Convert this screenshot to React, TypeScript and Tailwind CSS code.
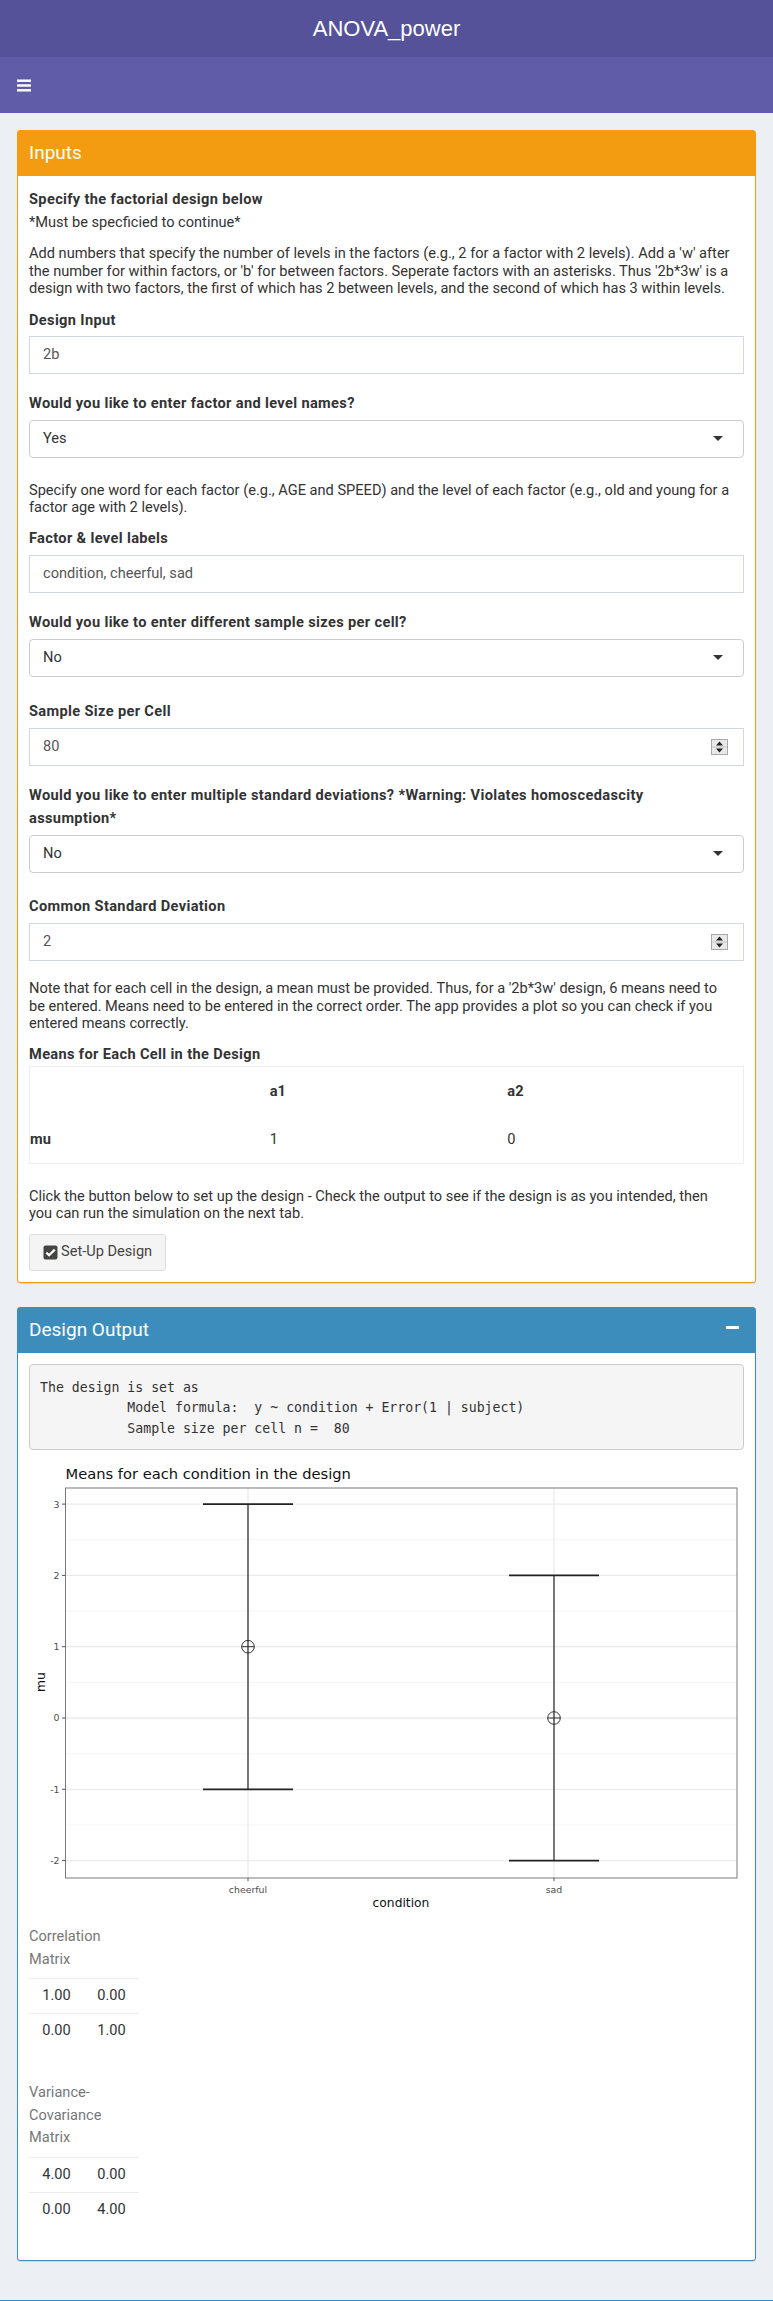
import React from "react";

const body = "font-['Roboto',sans-serif] text-[14.6px]";

function Label({ children, className = "" }: { children: React.ReactNode; className?: string }) {
  return <div className={`font-bold leading-[23px] tracking-[0.35px] ${className}`}>{children}</div>;
}

function Para({ lines, className = "" }: { lines: string[]; className?: string }) {
  return (
    <div className={`leading-[17.6px] ${className}`}>
      {lines.map((l, i) => (
        <div key={i} className="whitespace-nowrap">
          {l}
        </div>
      ))}
    </div>
  );
}

function TextInput({ value, className = "" }: { value: string; className?: string }) {
  return (
    <div className={`h-[38px] border border-[#d2d6de] bg-white flex items-center pl-[13px] text-[#555] ${className}`}>
      {value}
    </div>
  );
}

function NumberInput({ value, className = "" }: { value: string; className?: string }) {
  return (
    <div className={`h-[38px] border border-[#d2d6de] bg-white flex items-center justify-between pl-[13px] pr-[15px] text-[#555] ${className}`}>
      <span>{value}</span>
      <svg width="17" height="16" viewBox="0 0 17 16">
        <rect x="0.5" y="0.5" width="16" height="15" fill="#e9e9e9" stroke="#a9a9a9" />
        <line x1="1" y1="8" x2="16" y2="8" stroke="#c4c4c4" />
        <path d="M5 6.5 L8.5 2.5 L12 6.5 Z" fill="#222" />
        <path d="M5 9.5 L8.5 13.5 L12 9.5 Z" fill="#222" />
      </svg>
    </div>
  );
}

function Select({ value, className = "" }: { value: string; className?: string }) {
  return (
    <div className={`h-[38px] border border-[#cccccc] rounded-[4px] bg-white flex items-center justify-between pl-[13px] pr-[20px] text-[#333] ${className}`}>
      <span>{value}</span>
      <svg width="10" height="5" viewBox="0 0 10 5">
        <path d="M0 0 L10 0 L5 5 Z" fill="#333" />
      </svg>
    </div>
  );
}

function Matrix({ caption, rows, className = "" }: { caption: string[]; rows: string[][]; className?: string }) {
  return (
    <div className={`w-[110px] ${className}`}>
      <div className="text-[#777] leading-[22.5px] pb-[8px]">
        {caption.map((c, i) => (
          <div key={i}>{c}</div>
        ))}
      </div>
      {rows.map((r, i) => (
        <div key={i} className="flex h-[35px] items-center border-t border-[#ececec]">
          {r.map((c, j) => (
            <div key={j} className="w-[55px] text-center">
              {c}
            </div>
          ))}
        </div>
      ))}
    </div>
  );
}

const yv = (v: number) => 258 - 71.3 * v;

function MeansPlot() {
  const bars = [
    { x: 219, m: 1, label: "cheerful" },
    { x: 525, m: 0, label: "sad" },
  ];
  const major = [-2, -1, 0, 1, 2, 3];
  const minor = [-1.5, -0.5, 0.5, 1.5, 2.5];
  return (
    <svg width="713" height="458" viewBox="0 0 713 458" className="block mt-[10px]">
      <text x="36.5" y="18.7" fontFamily="DejaVu Sans, sans-serif" fontSize="14.7" fill="#111">
        Means for each condition in the design
      </text>
      <rect x="36.5" y="28" width="671.5" height="390" fill="#fff" />
      {minor.map((v) => (
        <line key={v} x1="36.5" x2="708" y1={yv(v)} y2={yv(v)} stroke="#f4f4f4" strokeWidth="0.9" />
      ))}
      {major.map((v) => (
        <line key={v} x1="36.5" x2="708" y1={yv(v)} y2={yv(v)} stroke="#ebebeb" strokeWidth="1.3" />
      ))}
      {bars.map((b) => (
        <line key={b.label} x1={b.x} x2={b.x} y1="28" y2="418" stroke="#ebebeb" strokeWidth="1.3" />
      ))}
      <rect x="36.5" y="28" width="671.5" height="390" fill="none" stroke="#7a7a7a" strokeWidth="1" />
      {major.map((v) => (
        <g key={v}>
          <line x1="33" x2="36.5" y1={yv(v)} y2={yv(v)} stroke="#555" strokeWidth="1" />
          <text x="30.5" y={yv(v) + 3.4} textAnchor="end" fontFamily="DejaVu Sans, sans-serif" fontSize="9.4" fill="#4d4d4d">
            {v}
          </text>
        </g>
      ))}
      {bars.map((b) => (
        <g key={b.label}>
          <line x1={b.x} x2={b.x} y1="418" y2="421" stroke="#555" strokeWidth="1" />
          <text x={b.x} y="432.5" textAnchor="middle" fontFamily="DejaVu Sans, sans-serif" fontSize="9.4" fill="#4d4d4d">
            {b.label}
          </text>
          <line x1={b.x} x2={b.x} y1={yv(b.m + 2)} y2={yv(b.m - 2)} stroke="#111" strokeWidth="1.1" />
          <line x1={b.x - 45} x2={b.x + 45} y1={yv(b.m + 2)} y2={yv(b.m + 2)} stroke="#222" strokeWidth="1.8" />
          <line x1={b.x - 45} x2={b.x + 45} y1={yv(b.m - 2)} y2={yv(b.m - 2)} stroke="#222" strokeWidth="1.8" />
          <circle cx={b.x} cy={yv(b.m)} r="6.3" fill="none" stroke="#333" strokeWidth="1" />
          <line x1={b.x - 6.3} x2={b.x + 6.3} y1={yv(b.m)} y2={yv(b.m)} stroke="#333" strokeWidth="1" />
        </g>
      ))}
      <text x="372" y="447" textAnchor="middle" fontFamily="DejaVu Sans, sans-serif" fontSize="12.3" fill="#111">
        condition
      </text>
      <text transform="translate(16 222) rotate(-90)" textAnchor="middle" fontFamily="DejaVu Sans, sans-serif" fontSize="12.3" fill="#111">
        mu
      </text>
    </svg>
  );
}

export default function App() {
  return (
    <div className={`min-h-[2301px] bg-[#ecf0f5] flex flex-col text-[#333] ${body}`}>
      <div className="h-[57px] bg-[#555299] flex items-center justify-center text-white text-[22px] font-['Liberation_Sans',sans-serif]">
        ANOVA_power
      </div>
      <div className="h-[56px] bg-[#605ca8] flex items-center pl-[17px]">
        <svg width="14" height="13" viewBox="0 0 14 13">
          <rect x="0" y="0.5" width="14" height="2.4" fill="#fff" />
          <rect x="0" y="5.3" width="14" height="2.4" fill="#fff" />
          <rect x="0" y="10.1" width="14" height="2.4" fill="#fff" />
        </svg>
      </div>

      <div className="px-[17px] pt-[17px]">
        {/* Inputs */}
        <div className="border border-[#f39c12] rounded-[3px] bg-white shadow-[0_1px_1px_rgba(0,0,0,0.1)]">
          <div className="h-[45px] bg-[#f39c12] flex items-center px-[11px] text-white text-[19px]">Inputs</div>
          <div className="px-[11px] pt-[12px] pb-[11px]">
            <Label>Specify the factorial design below</Label>
            <div className="leading-[23px]">*Must be specficied to continue*</div>
            <Para
              className="mt-[11px]"
              lines={[
                "Add numbers that specify the number of levels in the factors (e.g., 2 for a factor with 2 levels). Add a 'w' after",
                "the number for within factors, or 'b' for between factors. Seperate factors with an asterisks. Thus '2b*3w' is a",
                "design with two factors, the first of which has 2 between levels, and the second of which has 3 within levels.",
              ]}
            />
            <Label className="mt-[11px]">Design Input</Label>
            <TextInput className="mt-[4px]" value="2b" />
            <Label className="mt-[18px]">Would you like to enter factor and level names?</Label>
            <Select className="mt-[5px]" value="Yes" />
            <Para
              className="mt-[24px]"
              lines={[
                "Specify one word for each factor (e.g., AGE and SPEED) and the level of each factor (e.g., old and young for a",
                "factor age with 2 levels).",
              ]}
            />
            <Label className="mt-[10px]">Factor &amp; level labels</Label>
            <TextInput className="mt-[5px]" value="condition, cheerful, sad" />
            <Label className="mt-[18px]">Would you like to enter different sample sizes per cell?</Label>
            <Select className="mt-[5px]" value="No" />
            <Label className="mt-[23px]">Sample Size per Cell</Label>
            <NumberInput className="mt-[5px]" value="80" />
            <Label className="mt-[18px]">
              Would you like to enter multiple standard deviations? *Warning: Violates homoscedascity
              <br />
              assumption*
            </Label>
            <Select className="mt-[5px]" value="No" />
            <Label className="mt-[22px]">Common Standard Deviation</Label>
            <NumberInput className="mt-[5px]" value="2" />
            <Para
              className="mt-[19px]"
              lines={[
                "Note that for each cell in the design, a mean must be provided. Thus, for a '2b*3w' design, 6 means need to",
                "be entered. Means need to be entered in the correct order. The app provides a plot so you can check if you",
                "entered means correctly.",
              ]}
            />
            <Label className="mt-[10px]">Means for Each Cell in the Design</Label>
            <div className="border border-[#eeeeee]">
              <div className="grid grid-cols-3 h-[51px] items-center font-bold">
                <div />
                <div className="pl-[2px]">a1</div>
                <div className="pl-[2px]">a2</div>
              </div>
              <div className="grid grid-cols-3 h-[45px] items-center">
                <div className="font-bold">mu</div>
                <div className="pl-[2px]">1</div>
                <div className="pl-[2px]">0</div>
              </div>
            </div>
            <Para
              className="mt-[24px]"
              lines={[
                "Click the button below to set up the design - Check the output to see if the design is as you intended, then",
                "you can run the simulation on the next tab.",
              ]}
            />
            <button className="mt-[11px] h-[37px] flex items-center gap-[3px] px-[13px] border border-[#dddddd] rounded-[3px] bg-[#f4f4f4] text-[#444]">
              <svg width="15" height="15" viewBox="0 0 15 15">
                <rect x="0.5" y="0.5" width="14" height="14" rx="2" fill="#444" />
                <path d="M3.3 7.6 L6.1 10.3 L11.8 4.6" fill="none" stroke="#fff" strokeWidth="2.2" />
              </svg>
              <span>Set-Up Design</span>
            </button>
          </div>
        </div>

        {/* Design Output */}
        <div className="mt-[24px] border border-[#3c8dbc] rounded-[3px] bg-white shadow-[0_1px_1px_rgba(0,0,0,0.1)]">
          <div className="h-[45px] bg-[#3c8dbc] flex items-center justify-between pl-[11px] pr-[16px] text-white text-[19px]">
            <span>Design Output</span>
            <div className="w-[13px] h-[3px] bg-white -mt-[5px]" />
          </div>
          <div className="px-[11px] pt-[11px] pb-[33px]">
            <pre className="border border-[#cccccc] rounded-[4px] bg-[#f5f5f5] pt-[13px] pb-[10px] px-[10px] font-['DejaVu_Sans_Mono',monospace] text-[13.2px] leading-[20.5px] text-[#333]">
              {"The design is set as\n           Model formula:  y ~ condition + Error(1 | subject)\n           Sample size per cell n =  80"}
            </pre>
            <MeansPlot />
            <Matrix className="mt-[7px]" caption={["Correlation", "Matrix"]} rows={[["1.00", "0.00"], ["0.00", "1.00"]]} />
            <Matrix className="mt-[33px]" caption={["Variance-", "Covariance", "Matrix"]} rows={[["4.00", "0.00"], ["0.00", "4.00"]]} />
          </div>
        </div>
      </div>
      <div className="mt-auto h-px bg-[#3c8dbc]" />
    </div>
  );
}
